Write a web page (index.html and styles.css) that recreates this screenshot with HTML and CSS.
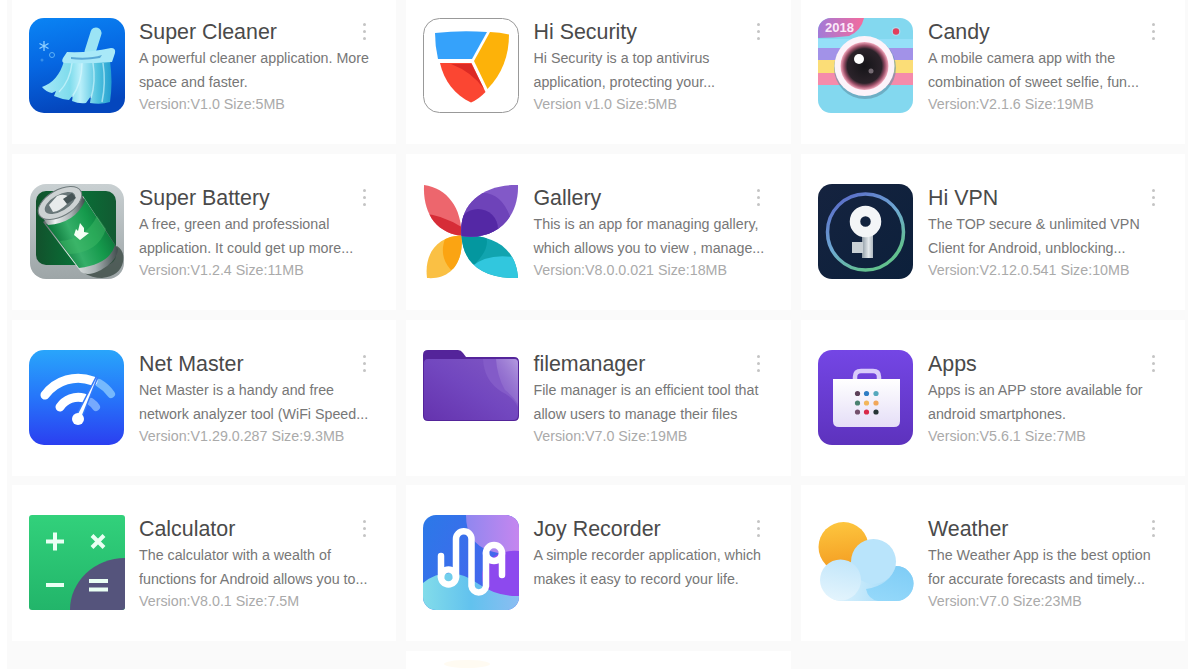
FILE: index.html
```html
<!DOCTYPE html>
<html lang="en">
<head>
    <meta charset="UTF-8">
    <meta name="viewport" content="width=device-width, initial-scale=1.0">
    <title>Apps</title>
    <link rel="stylesheet" href="styles.css">
</head>
<body>
    <div class="app-list">

        <div class="app-card">
            <svg class="app-icon" viewBox="0 0 96 96">
                <defs>
                    <linearGradient id="cleanBg" x1="0" y1="0" x2="0.2" y2="1"><stop offset="0" stop-color="#0a84f4"/><stop offset="0.5" stop-color="#0667e2"/><stop offset="1" stop-color="#0446bd"/></linearGradient>
                    <linearGradient id="brush"><stop offset="0" stop-color="#a5e8f8"/><stop offset="0.4" stop-color="#7fdcec"/><stop offset="0.55" stop-color="#b9effa"/><stop offset="0.8" stop-color="#52c3df"/><stop offset="1" stop-color="#249fd0"/></linearGradient>
                </defs>
                <rect width="96" height="95" rx="15" fill="url(#cleanBg)"/>
                <path d="M67 15L61 34" stroke="#9be4f5" stroke-width="11" stroke-linecap="round"/>
                <path d="M35 43C31 57 24 65 13 69Q17 74 23 75L27 73L25 78Q32 81 40 82L44 77L43 83Q50 86 57 85L62 78L61 85Q72 87 81 84Q84 64 81 43Z" fill="url(#brush)"/>
                <path d="M43 45Q41 63 30 74M53 45Q53 65 43 79M64 45Q67 64 62 80M74 45Q77 65 73 84" fill="none" stroke="#dcfaff" stroke-width="1.5" opacity=".6"/>
                <path d="M38 34Q60 35 82 30Q87 30 86 35L83 44Q58 46 35 45Q32 44 34 40Z" fill="#a9e9f8"/>
                <path d="M42 39Q60 41 73 37L71 40Q55 43 42 41Z" fill="#5aa9d6"/>
                <path d="M15 23v10M10.500 25.500l9 5M19.500 25.500l-9 5" stroke="#8fd0ff" stroke-width="1.300"/>
                <circle cx="23" cy="37" r="2.500" fill="none" stroke="#5fb2f5"/>
                <circle cx="13" cy="42" r="1.500" fill="#388fe8"/>
            </svg>
            <div class="app-info">
                <div class="app-head"><h3>Super Cleaner</h3><span class="more"><i></i><i></i><i></i></span></div>
                <p class="desc">A powerful cleaner application. More<br>space and faster.</p>
                <p class="version">Version:V1.0 Size:5MB</p>
            </div>
        </div>

        <div class="app-card">
            <svg class="app-icon" viewBox="0 0 96 96">
                <rect x="0.500" y="0.500" width="95" height="94" rx="16" fill="#fff" stroke="#999"/>
                <path d="M12 15Q38 12 64 14L49 41H15Q12 28 12 15Z" fill="#35a2fb"/>
                <path d="M67 14Q77 14 86 16.500Q86 49 64.500 71L51 43Z" fill="#fdb209"/>
                <path d="M17 45H48.500L62.500 74Q56 81 48 84.500C32 77 21 63 17 45Z" fill="#fb4632"/>
                <path d="M28 46H48.500L61 71Q49 54 28 46Z" fill="#dc2a24"/>
            </svg>
            <div class="app-info">
                <div class="app-head"><h3>Hi Security</h3><span class="more"><i></i><i></i><i></i></span></div>
                <p class="desc">Hi Security is a top antivirus<br>application, protecting your...</p>
                <p class="version">Version v1.0 Size:5MB</p>
            </div>
        </div>

        <div class="app-card">
            <svg class="app-icon" viewBox="0 0 96 96">
                <defs>
                    <clipPath id="candyClip"><rect width="95" height="95" rx="13"/></clipPath>
                    <linearGradient id="badge"><stop offset="0" stop-color="#a27ad8"/><stop offset="1" stop-color="#f56b9c"/></linearGradient>
                    <radialGradient id="lens"><stop offset="0" stop-color="#151418"/><stop offset="0.72" stop-color="#2b232a"/><stop offset="0.86" stop-color="#9c5069"/><stop offset="1" stop-color="#f3a9bd"/></radialGradient>
                </defs>
                <g clip-path="url(#candyClip)">
                    <rect width="96" height="96" fill="#83d8ef"/>
                    <rect y="21" width="96" height="9" fill="#95dff8"/>
                    <rect y="30" width="96" height="12" fill="#a292e8"/>
                    <rect y="42" width="96" height="13" fill="#fbdd77"/>
                    <rect y="55" width="96" height="12" fill="#f58bab"/>
                    <path d="M0 0H46Q43 13 31 18Q15 20 0 20Z" fill="url(#badge)"/>
                    <text class="badge-text" x="7" y="14">2018</text>
                    <circle cx="47" cy="50" r="31" fill="#5f92a8" opacity=".6"/>
                    <circle cx="46.500" cy="48" r="30" fill="#fcf3fa"/>
                    <circle cx="46.500" cy="48" r="24" fill="url(#lens)"/>
                    <circle cx="41" cy="41" r="5" fill="#fff"/>
                    <circle cx="53" cy="53" r="2.500" fill="#756b73"/>
                    <circle cx="78" cy="13.500" r="4.500" fill="#a9dcf0"/>
                    <circle cx="78" cy="13.500" r="3.200" fill="#e23f5c"/>
                </g>
            </svg>
            <div class="app-info">
                <div class="app-head"><h3>Candy</h3><span class="more"><i></i><i></i><i></i></span></div>
                <p class="desc">A mobile camera app with the<br>combination of sweet selfie, fun...</p>
                <p class="version">Version:V2.1.6 Size:19MB</p>
            </div>
        </div>

        <div class="app-card">
            <svg class="app-icon" viewBox="0 0 96 96">
                <defs>
                    <linearGradient id="frame" x1="0" y1="0" x2="0" y2="1"><stop offset="0" stop-color="#c9d0d2"/><stop offset="1" stop-color="#9da5a7"/></linearGradient>
                    <linearGradient id="inner"><stop offset="0" stop-color="#12512c"/><stop offset="0.5" stop-color="#087137"/><stop offset="1" stop-color="#125a32"/></linearGradient>
                    <linearGradient id="cell" x1="0" y1="0.400" x2="0.900" y2="0"><stop offset="0" stop-color="#087236"/><stop offset="0.3" stop-color="#35af69"/><stop offset="0.6" stop-color="#159a4c"/><stop offset="1" stop-color="#096332"/></linearGradient>
                    <linearGradient id="metal"><stop offset="0" stop-color="#5c6567"/><stop offset="0.35" stop-color="#eef1f1"/><stop offset="0.7" stop-color="#a9b2b3"/><stop offset="1" stop-color="#404b4c"/></linearGradient>
                </defs>
                <rect x="1" width="94" height="95" rx="16" fill="url(#frame)"/>
                <rect x="7" y="7" width="80" height="74" rx="10" fill="url(#inner)"/>
                <path d="M62 86L88 62Q96 67 94 78Q91 92 73 94Q63 94 55 89Z" fill="#3b4a43" opacity=".8"/>
                <path d="M14 38L54 12L89 65Q88 77 72 86Q59 93 52 88Z" fill="url(#metal)"/>
                <path d="M17 40Q43 38 55 14L86 61Q81 80 50 84Z" fill="url(#cell)"/>
                <path d="M31 57Q57 55 68 32L77 45Q69 69 40 70Z" fill="#42bd69" opacity=".45"/>
                <path d="M10 29L19 41Q46 39 56 17L50 6Z" fill="url(#metal)"/>
                <ellipse cx="31" cy="19" rx="24" ry="13" transform="rotate(-30 31 19)" fill="#cdd2d3" stroke="#707b7d"/>
                <ellipse cx="31" cy="19" rx="17" ry="8" transform="rotate(-30 31 19)" fill="#697779"/>
                <path d="M20 21L28 12Q35 9 40 13L38 20Q31 27 24 28Z" fill="#e8ebeb"/>
                <path d="M34 15L43 9L47 14L38 20Z" fill="#455355"/>
                <path d="M51 39L55 44V48L60 49L51 56L45 51L47 45L49 47Z" fill="#f5fff5"/>
            </svg>
            <div class="app-info">
                <div class="app-head"><h3>Super Battery</h3><span class="more"><i></i><i></i><i></i></span></div>
                <p class="desc">A free, green and professional<br>application. It could get up more...</p>
                <p class="version">Version:V1.2.4 Size:11MB</p>
            </div>
        </div>

        <div class="app-card">
            <svg class="app-icon" viewBox="0 0 96 96">
                <defs>
                    <clipPath id="petalRed"><path d="M1 1C24 4 39 24 38.500 52C10 48 0 26 1 1Z"/></clipPath>
                    <clipPath id="petalPurple"><path d="M38.500 52C35 20 60 0 95 1C96 34 73 57 38.500 52Z"/></clipPath>
                    <clipPath id="petalTeal"><path d="M38.500 51.500C68 50 93 62 95 94C60 95 40 80 38.500 51.500Z"/></clipPath>
                    <clipPath id="petalGold"><path d="M38.500 51.500C14 52 1 70 4 94C28 96 41 78 38.500 51.500Z"/></clipPath>
                </defs>
                <g clip-path="url(#petalRed)">
                    <rect width="40" height="53" fill="#ed666d"/>
                    <path d="M0 30Q18 30 40 44V53H0Z" fill="#d62c37"/>
                </g>
                <g clip-path="url(#petalGold)">
                    <rect y="50" width="42" height="46" fill="#fac044"/>
                    <path d="M24 50Q14 71 28 86L42 78V50Z" fill="#fba412"/>
                </g>
                <g clip-path="url(#petalTeal)">
                    <rect x="38" y="48" width="58" height="47" fill="#11a4af"/>
                    <path d="M62 50Q69 63 51 81L38 70V48Z" fill="#04979f"/>
                    <path d="M48 83Q65 68 96 74V96H48Z" fill="#31c7de"/>
                </g>
                <g clip-path="url(#petalPurple)">
                    <rect x="36" width="60" height="54" fill="#8259c8"/>
                    <path d="M60 9Q80 9 89 38L96 40V54H36V0Z" fill="#6e43b9"/>
                    <circle cx="55" cy="45" r="20" fill="#5428a5"/>
                </g>
            </svg>
            <div class="app-info">
                <div class="app-head"><h3>Gallery</h3><span class="more"><i></i><i></i><i></i></span></div>
                <p class="desc">This is an app for managing gallery,<br>which allows you to view , manage...</p>
                <p class="version">Version:V8.0.0.021 Size:18MB</p>
            </div>
        </div>

        <div class="app-card">
            <svg class="app-icon" viewBox="0 0 96 96">
                <defs>
                    <linearGradient id="vpnBg" x1="0" y1="0" x2="1" y2="1"><stop offset="0" stop-color="#15233f"/><stop offset="1" stop-color="#0c203b"/></linearGradient>
                    <linearGradient id="ring" x1="0" y1="0.200" x2="0.500" y2="1"><stop offset="0" stop-color="#5c72c9"/><stop offset="0.5" stop-color="#6fa9d4"/><stop offset="1" stop-color="#63c08f"/></linearGradient>
                    <linearGradient id="stem"><stop offset="0" stop-color="#8f9ba5"/><stop offset="0.6" stop-color="#e4e9ec"/><stop offset="1" stop-color="#aeb8c0"/></linearGradient>
                </defs>
                <rect width="95" height="95" rx="14" fill="url(#vpnBg)"/>
                <circle cx="47.500" cy="48" r="38" fill="none" stroke="url(#ring)" stroke-width="3.500"/>
                <rect x="44" y="48" width="11" height="26" fill="url(#stem)"/>
                <rect x="34" y="58" width="11" height="11" fill="#c9d0d5"/>
                <circle cx="47.500" cy="37.500" r="10.500" fill="none" stroke="#f3f5f7" stroke-width="10.500"/>
            </svg>
            <div class="app-info">
                <div class="app-head"><h3>Hi VPN</h3><span class="more"><i></i><i></i><i></i></span></div>
                <p class="desc">The TOP secure &amp; unlimited VPN<br>Client for Android, unblocking...</p>
                <p class="version">Version:V2.12.0.541 Size:10MB</p>
            </div>
        </div>

        <div class="app-card">
            <svg class="app-icon" viewBox="0 0 96 96">
                <defs>
                    <linearGradient id="netBg" x1="0" y1="0" x2="0" y2="1"><stop offset="0" stop-color="#29a5fb"/><stop offset="0.5" stop-color="#2675fa"/><stop offset="1" stop-color="#2b3ff0"/></linearGradient>
                </defs>
                <rect width="95" height="95" rx="15" fill="url(#netBg)"/>
                <g fill="none" stroke-linecap="round">
                    <path d="M70 33Q77 37 82 44" stroke="#76b9fd" stroke-width="8"/>
                    <path d="M62 52Q65 54 67 57" stroke="#76a9fd" stroke-width="8"/>
                    <path d="M16 45A41 41 0 0 1 64 31" stroke="#fff" stroke-width="9"/>
                    <path d="M31 57A22 22 0 0 1 55 48" stroke="#fff" stroke-width="9"/>
                </g>
                <path d="M68 27L51 70L47 68Z" fill="#fff" stroke="#347bfa" stroke-width="3" paint-order="stroke"/>
                <circle cx="49" cy="69" r="6" fill="#fff"/>
            </svg>
            <div class="app-info">
                <div class="app-head"><h3>Net Master</h3><span class="more"><i></i><i></i><i></i></span></div>
                <p class="desc">Net Master is a handy and free<br>network analyzer tool (WiFi Speed...</p>
                <p class="version">Version:V1.29.0.287 Size:9.3MB</p>
            </div>
        </div>

        <div class="app-card">
            <svg class="app-icon" viewBox="0 0 96 96">
                <defs>
                    <linearGradient id="folder" x1="0" y1="1" x2="1" y2="0"><stop offset="0" stop-color="#6533ae"/><stop offset="0.5" stop-color="#7247bf"/><stop offset="1" stop-color="#8058c4"/></linearGradient>
                    <linearGradient id="shine" x1="1" y1="0" x2="0.300" y2="1"><stop offset="0" stop-color="#b49be0"/><stop offset="1" stop-color="#8f6bcd" stop-opacity="0.300"/></linearGradient>
                </defs>
                <path d="M0 5Q0 0 5 0H35Q38 0 40 3L43 7H91Q96 7 96 12V66Q96 71 91 71H5Q0 71 0 66Z" fill="#54249a"/>
                <path d="M1 13Q1 9 5 9H91Q95 9 95 13V65Q95 70 90 70H5Q1 70 1 65Z" fill="url(#folder)"/>
                <path d="M60 9H91Q95 9 95 13V57Q90 47 79 42Q61 31 60 9Z" fill="#835bc8"/>
                <path d="M73 9H91Q95 9 95 13V54Q90 46 82 40Q74 26 73 9Z" fill="url(#shine)"/>
            </svg>
            <div class="app-info">
                <div class="app-head"><h3>filemanager</h3><span class="more"><i></i><i></i><i></i></span></div>
                <p class="desc">File manager is an efficient tool that<br>allow users to manage their files</p>
                <p class="version">Version:V7.0 Size:19MB</p>
            </div>
        </div>

        <div class="app-card">
            <svg class="app-icon" viewBox="0 0 96 96">
                <defs>
                    <linearGradient id="appsBg" x1="0" y1="0" x2="0" y2="1"><stop offset="0" stop-color="#7446e5"/><stop offset="1" stop-color="#5d32bd"/></linearGradient>
                    <linearGradient id="case" x1="0" y1="0" x2="0" y2="1"><stop offset="0" stop-color="#fff"/><stop offset="1" stop-color="#e5def7"/></linearGradient>
                </defs>
                <rect width="95" height="95" rx="14" fill="url(#appsBg)"/>
                <path d="M37 31V27Q37 21 43 21H55Q61 21 61 27V31" fill="none" stroke="#d9cbfa" stroke-width="4.500"/>
                <path d="M15 29H82V71Q82 77 76 77H21Q15 77 15 71Z" fill="url(#case)"/>
                <circle cx="39.500" cy="43.500" r="2.600" fill="#5d4059"/>
                <circle cx="48.500" cy="43.500" r="2.600" fill="#2e7dc5"/>
                <circle cx="58" cy="43.500" r="2.600" fill="#56a8bd"/>
                <circle cx="39.500" cy="53" r="2.600" fill="#4b8270"/>
                <circle cx="48.500" cy="53" r="2.600" fill="#f2b65b"/>
                <circle cx="58" cy="53" r="2.600" fill="#f1a75b"/>
                <circle cx="39.500" cy="62" r="2.600" fill="#73506c"/>
                <circle cx="48.500" cy="62" r="2.600" fill="#d92949"/>
                <circle cx="58" cy="62" r="2.600" fill="#263436"/>
            </svg>
            <div class="app-info">
                <div class="app-head"><h3>Apps</h3><span class="more"><i></i><i></i><i></i></span></div>
                <p class="desc">Apps is an APP store available for<br>android smartphones.</p>
                <p class="version">Version:V5.6.1 Size:7MB</p>
            </div>
        </div>

        <div class="app-card">
            <svg class="app-icon" viewBox="0 0 96 96">
                <defs>
                    <linearGradient id="calcBg" x1="0" y1="0" x2="0" y2="1"><stop offset="0" stop-color="#32d17b"/><stop offset="1" stop-color="#22b56a"/></linearGradient>
                </defs>
                <rect width="96" height="95" rx="3" fill="url(#calcBg)"/>
                <path d="M41 95A55 52 0 0 1 96 43V92Q96 95 93 95Z" fill="#55547c"/>
                <path d="M17 26.500H35M26 17.500V35.500M63 20.500L75 32.500M75 20.500L63 32.500M17 70H35M60 66H79M60 74.500H79" stroke="#e9fff3" stroke-width="4"/>
            </svg>
            <div class="app-info">
                <div class="app-head"><h3>Calculator</h3><span class="more"><i></i><i></i><i></i></span></div>
                <p class="desc">The calculator with a wealth of<br>functions for Android allows you to...</p>
                <p class="version">Version:V8.0.1 Size:7.5M</p>
            </div>
        </div>

        <div class="app-card">
            <svg class="app-icon" viewBox="0 0 96 96">
                <defs>
                    <clipPath id="joyClip"><rect width="96" height="95" rx="13"/></clipPath>
                    <linearGradient id="joyBg" x1="0" y1="0" x2="1" y2="0.500"><stop offset="0" stop-color="#2b79e8"/><stop offset="1" stop-color="#4a62ee"/></linearGradient>
                    <linearGradient id="joyTop"><stop offset="0" stop-color="#9087ef"/><stop offset="1" stop-color="#c586ef"/></linearGradient>
                    <linearGradient id="joyWave"><stop offset="0" stop-color="#82dcea"/><stop offset="0.5" stop-color="#62c2ee"/><stop offset="1" stop-color="#8bbdf2"/></linearGradient>
                </defs>
                <g clip-path="url(#joyClip)">
                    <rect width="96" height="96" fill="url(#joyBg)"/>
                    <path d="M43 0Q43 28 67 36L79 39L96 38V0Z" fill="url(#joyTop)"/>
                    <path d="M96 36Q76 34 63 48Q53 64 68 82H96Z" fill="#8d49ee"/>
                    <path d="M0 68Q12 58 27 58Q42 59 54 68Q74 82 96 81V96H0Z" fill="url(#joyWave)"/>
                </g>
                <g fill="none" stroke="#fff" stroke-width="6.500" stroke-linecap="round">
                    <path d="M18 41V62A7.500 7.500 0 0 0 33 62V24A7.700 7.700 0 0 1 48.500 24V71A7.300 7.300 0 0 0 63 71V38A8 8 0 0 1 79 38V60"/>
                    <path d="M18 62A7.500 7.500 0 0 1 33 62"/>
                    <path d="M63 38A8 8 0 0 0 79 38"/>
                </g>
            </svg>
            <div class="app-info">
                <div class="app-head"><h3>Joy Recorder</h3><span class="more"><i></i><i></i><i></i></span></div>
                <p class="desc">A simple recorder application, which<br>makes it easy to record your life.</p>
            </div>
        </div>

        <div class="app-card">
            <svg class="app-icon" viewBox="0 0 96 96">
                <defs>
                    <linearGradient id="sun" x1="0.500" y1="0" x2="0.600" y2="1"><stop offset="0" stop-color="#fdc53e"/><stop offset="1" stop-color="#f39a20"/></linearGradient>
                    <linearGradient id="cloudBase"><stop offset="0" stop-color="#e6f5fd"/><stop offset="0.4" stop-color="#c6e9fb"/><stop offset="1" stop-color="#8ed3f8"/></linearGradient>
                    <linearGradient id="cloudRight" x1="0.700" y1="0" x2="0.300" y2="1"><stop offset="0" stop-color="#80cdf6"/><stop offset="1" stop-color="#94d8fa"/></linearGradient>
                    <linearGradient id="cloudLeft" x1="0.600" y1="0" x2="0.400" y2="1"><stop offset="0" stop-color="#c2e6fa"/><stop offset="1" stop-color="#e3f4fd"/></linearGradient>
                </defs>
                <circle cx="25.500" cy="32" r="25" fill="url(#sun)"/>
                <path d="M22 86A20 20 0 0 1 12 50L60 44L78 51A17.500 17.500 0 0 1 78 86Z" fill="url(#cloudBase)"/>
                <path d="M48 74Q71 71 78 51A17.500 17.500 0 0 1 78 86H60Q50 84 48 74Z" fill="url(#cloudRight)"/>
                <circle cx="55.500" cy="46.500" r="22.500" fill="#b9e4fb"/>
                <circle cx="22.500" cy="65" r="20.500" fill="url(#cloudLeft)"/>
            </svg>
            <div class="app-info">
                <div class="app-head"><h3>Weather</h3><span class="more"><i></i><i></i><i></i></span></div>
                <p class="desc">The Weather App is the best option<br>for accurate forecasts and timely...</p>
                <p class="version">Version:V7.0 Size:23MB</p>
            </div>
        </div>

        <div class="app-card last">
            <svg class="app-peek" viewBox="0 0 96 18">
                <ellipse cx="44" cy="13" rx="23" ry="4" fill="#fffbf2"/>
            </svg>
        </div>

    </div>
</body>
</html>
```
FILE: styles.css
```css
body {
    margin: 0;
    padding: 0;
    background-color: #fff;
    font-family: Arial, "Liberation Sans", sans-serif;
    overflow: hidden;
}

.app-list {
    display: grid;
    grid-template-columns: repeat(3, 384.5px);
    grid-template-rows: repeat(4, 156px) 18px;
    gap: 9.6px 10px;
    margin-left: 7px;
    margin-top: -11.6px;
    padding-left: 4.6px;
    background-color: #fafafa;
}

.app-card {
    display: flex;
    align-items: flex-start;
    background-color: #fff;
    padding: 30px 0 0 17.400px;
    box-sizing: border-box;
}

.app-card.last {
    grid-column: 2;
    padding-top: 0;
}

.app-icon {
    width: 96px;
    height: 96px;
    flex: none;
}

.app-peek {
    width: 96px;
    height: 18px;
}

.badge-text {
    font-size: 13px;
    font-weight: bold;
    fill: #fbe9fa;
}

.app-info {
    width: 227px;
    margin-left: 14px;
    white-space: nowrap;
}

.app-head {
    display: flex;
    justify-content: space-between;
    height: 28px;
}

.app-head h3 {
    margin: 0;
    font-size: 21.4px;
    font-weight: normal;
    line-height: 28px;
    color: #4a4a4a;
}

/* three dots menu */
.more {
    display: flex;
    flex-direction: column;
    gap: 4px;
    padding-top: 5px;
}

.more i {
    width: 3px;
    height: 3px;
    border-radius: 50%;
    background-color: #c4c4c4;
}

.desc {
    margin: 0;
    font-size: 14.28px;
    line-height: 24px;
    color: #777;
}

.version {
    margin: 0;
    font-size: 14.28px;
    line-height: 21px;
    color: #aaa;
}
```
